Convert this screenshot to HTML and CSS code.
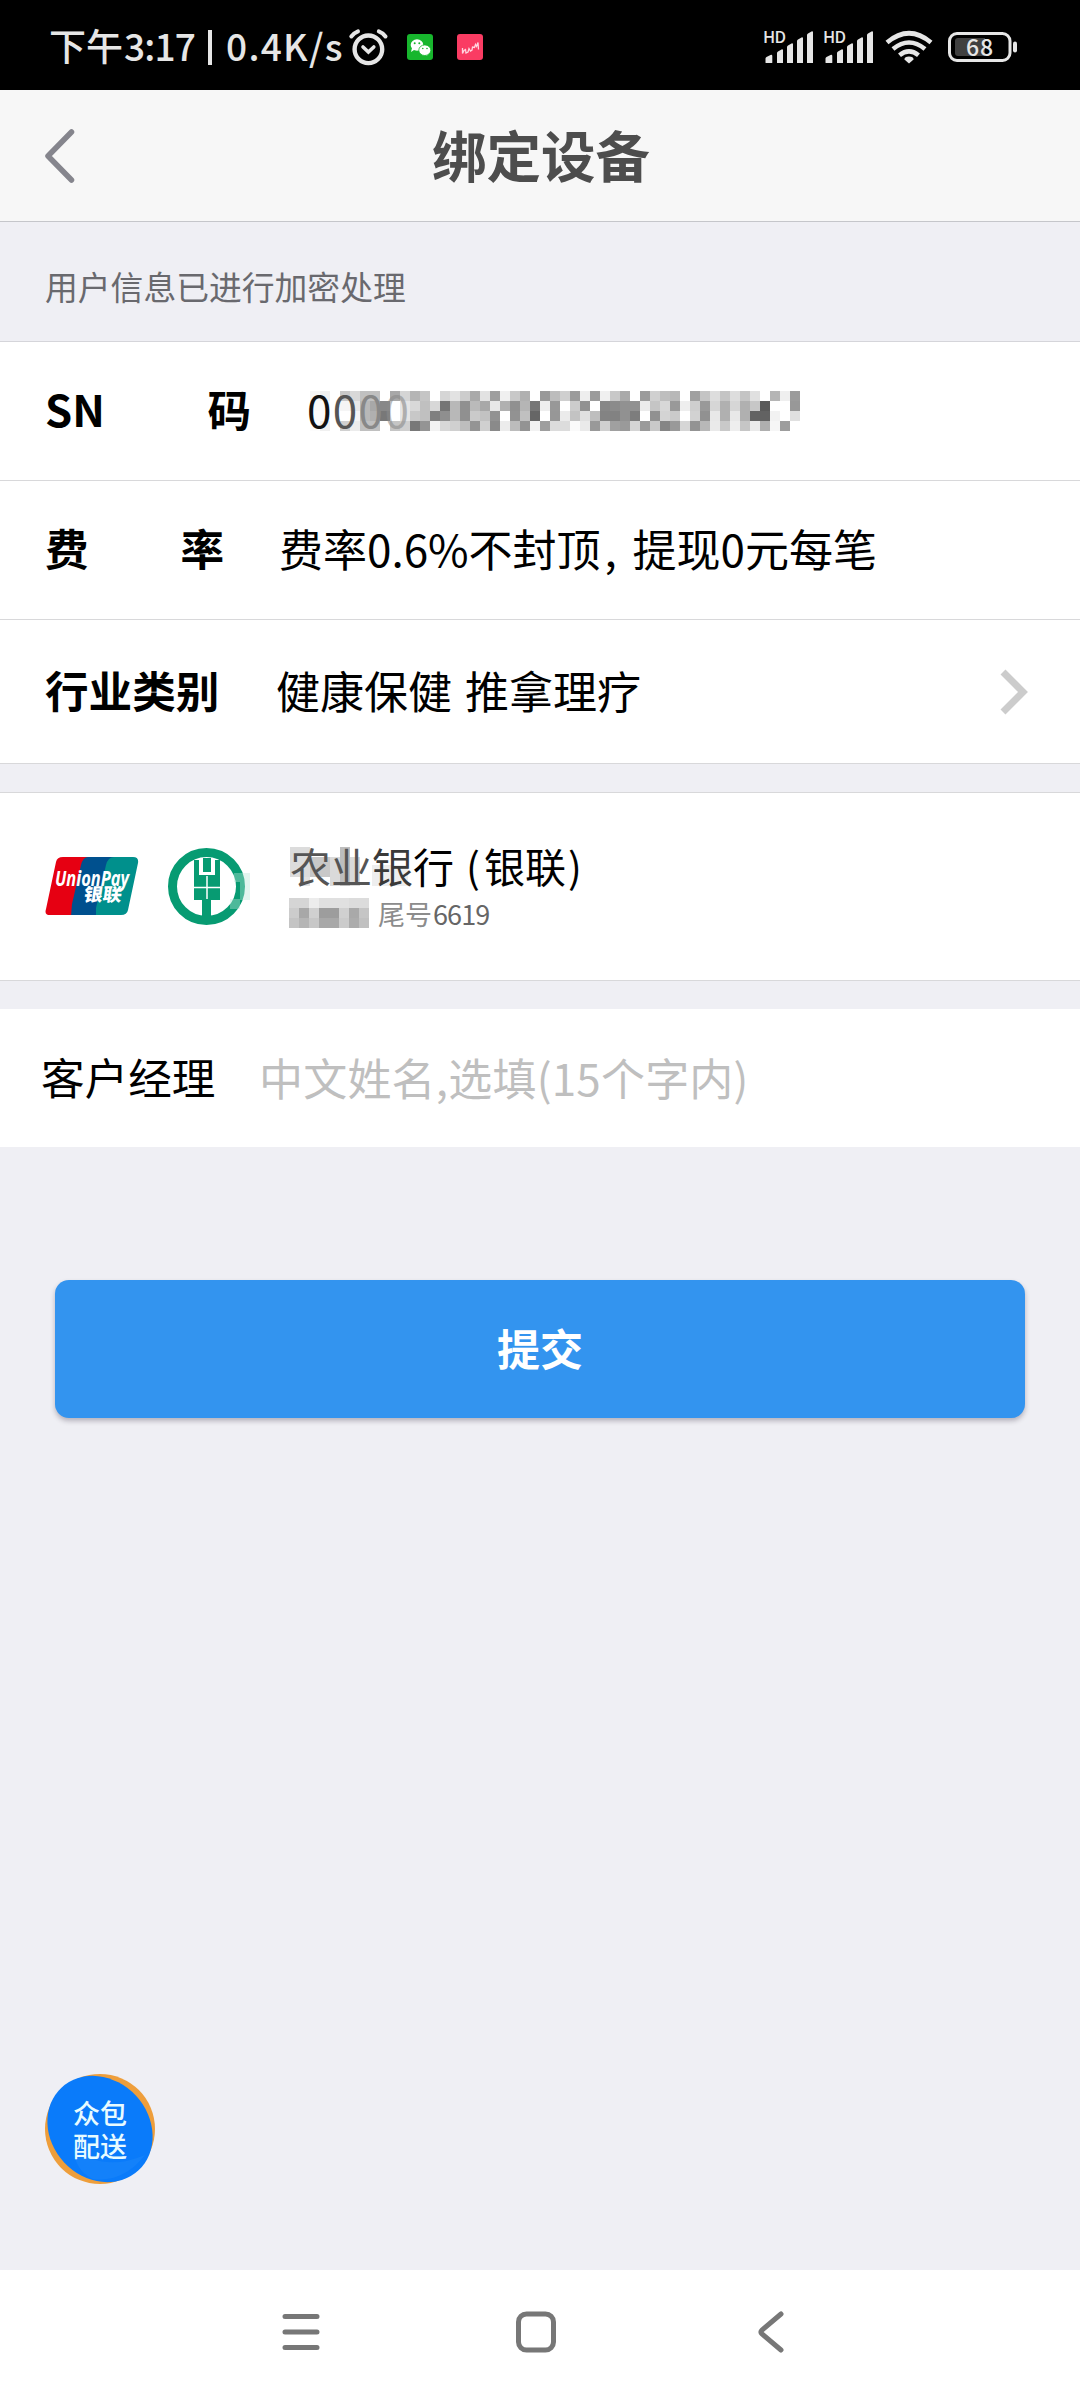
FILE: index.html
```html
<!DOCTYPE html>
<html lang="zh-CN">
<head>
<meta charset="utf-8">
<title>绑定设备</title>
<link rel="stylesheet" href="styles.css">
</head>
<body>
<div class="status">
  <div class="status-left">
    <span class="clock">下午</span><span class="time">3:17</span><span class="bar"></span><span class="speed">0.4K/s</span>
    <svg class="alarm" width="42" height="38" viewBox="0 0 42 38" fill="none" stroke="#e6e6e6" stroke-linecap="round"><circle cx="21.4" cy="21.3" r="13.8" stroke-width="4.4"/><path d="M4.3 8.5Q7 5 11 3.4M38.5 8.5Q36 5 31.8 3.4" stroke-width="4"/><path d="M16 19l5.4 5 5.4-5" stroke-width="3.6"/></svg>
    <svg class="wechat" width="26" height="26" viewBox="0 0 26 26"><rect width="26" height="26" rx="3" fill="#17b62d"/><path d="M4 18l1-4h5zM20 22l1-4h-5z" fill="#fff"/><ellipse cx="10" cy="11" rx="6.3" ry="5.8" fill="#fff"/><ellipse cx="17.8" cy="16.2" rx="6" ry="5.3" fill="#fff" stroke="#17b62d" stroke-width=".8"/><g fill="#17b62d"><circle cx="7.7" cy="9.3" r="1"/><circle cx="12.3" cy="9.3" r="1"/><circle cx="15.8" cy="14.5" r=".8"/><circle cx="20" cy="14.5" r=".8"/></g></svg>
    <svg width="26" height="26" viewBox="0 0 26 26"><rect width="26" height="26" rx="3" fill="#fa3c63"/><path d="M5.5 14v5.500l1.500-3 1.500-1 .5 3.500 2-1 1-3.500 1.500 2.500 1.500-1 .5-3 2 .5 1-3 1 2 1.500-4 .5 7" fill="none" stroke="#ffd5df" stroke-width="1.300"/></svg>
  </div>
  <div class="status-right">
    <svg class="signal" width="52" height="34" viewBox="0 0 52 34" fill="#e6e6e6"><text x="0" y="13" class="hd" textLength="23">HD</text><path d="M2.5 32.5v-4q0-1 1-1.6l4-2q1.800-.5 1.800 1v6.600q0 .5-.5.5H3q-.5 0-.5-.5zM14 33v-10q0-1 1-1.600l3.500-2q1.500-.5 1.500 1V33zM24 33V17q0-1 1-1.600l3.500-2q1.500-.5 1.500 1V33zM34 33V11q0-1 1-1.600l3.500-2q1.500-.5 1.500 1V33zM44 33V5q0-1 1-1.600l3.500-2q1.500-.5 1.500 1V33z"/></svg>
    <svg class="signal" width="52" height="34" viewBox="0 0 52 34" fill="#e6e6e6"><text x="0" y="13" class="hd" textLength="23">HD</text><path d="M2.5 32.5v-4q0-1 1-1.6l4-2q1.800-.5 1.800 1v6.600q0 .5-.5.5H3q-.5 0-.5-.5zM14 33v-10q0-1 1-1.600l3.500-2q1.500-.5 1.500 1V33zM24 33V17q0-1 1-1.600l3.500-2q1.500-.5 1.500 1V33zM34 33V11q0-1 1-1.600l3.500-2q1.500-.5 1.500 1V33zM44 33V5q0-1 1-1.600l3.500-2q1.500-.5 1.500 1V33z"/></svg>
    <svg class="wifi" width="48" height="34" viewBox="0 0 48 34" fill="none" stroke="#e6e6e6" stroke-width="4.6"><path d="M2 12.5Q24-6 46 12.500M8 19Q24 6 40 19M14.500 25.200Q24 17.500 33.500 25.200"/><path d="M24 33.500l-4.600-4q0-3 4.600-3t4.600 3z" fill="#e6e6e6" stroke="none"/></svg>
    <svg width="70" height="32" viewBox="0 0 70 32"><rect x="1.5" y="2.5" width="60.5" height="27" rx="7.5" fill="none" stroke="#e6e6e6" stroke-width="3"/><path d="M10 7h27v18H10q-3 0-3-3V10q0-3 3-3z" fill="#404040"/><rect x="65" y="10.500" width="4" height="11" rx="2" fill="#e6e6e6"/><text x="18" y="24.5" class="level" textLength="27">68</text></svg>
  </div>
</div>
<header class="nav">
  <svg class="back" width="34" height="56" viewBox="0 0 34 56"><path d="M28.500 4L5 28l23.500 24" fill="none" stroke="#85858d" stroke-width="5.500" stroke-linecap="round" stroke-linejoin="round"/></svg>
  <h1>绑定设备</h1>
</header>
<p class="notice">用户信息已进行加密处理</p>
<main>
  <section class="group">
    <div class="row"><div class="label sn"><span>SN</span><span>码</span></div><div class="serial"><span class="digits"><i>0</i><i>0</i><i>0</i><i>0</i></span><svg id="serial-mask" width="490" height="40" shape-rendering="crispEdges"></svg></div></div>
    <div class="row"><div class="label rate"><span>费</span><span>率</span></div><div class="value">费率0.6%不封顶<span class="comma">,</span>提现0元每笔</div></div>
    <div class="row industry"><div class="label">行业类别</div><div class="value">健康保健<span class="space"> </span>推拿理疗</div><svg class="chevron" width="30" height="48" viewBox="0 0 30 48"><path d="M4 4l20 20L4 44" fill="none" stroke="#ccc" stroke-width="7"/></svg></div>
  </section>
  <section class="bank">
    <svg class="unionpay" width="94" height="59" viewBox="0 0 94 59"><defs><clipPath id="card"><path d="M18 0H88Q94 0 93 6L83 53Q82 58 76 58H5Q-1 58 1 52L11 5Q12 0 18 0z"/></clipPath></defs><g clip-path="url(#card)"><path d="M0 0h50v59H0z" fill="#e60012"/><path d="M43 0h32L60 59H26L27 47 36 8Q38 0 43 0z" fill="#00508e"/><path d="M69 0h25v59H51V51L61 8Q63 0 69 0z" fill="#00908c"/></g><text x="10" y="28.500" class="up-en" textLength="74" lengthAdjust="spacingAndGlyphs">UnionPay</text><g transform="translate(38 44) skewX(-8)"><text class="up-zh" textLength="38" lengthAdjust="spacingAndGlyphs">银联</text></g></svg>
    <svg class="abc" width="84" height="78" viewBox="0 0 84 78"><circle cx="38.500" cy="38.500" r="34" fill="#fff" stroke="#079b72" stroke-width="9"/><path d="M26 12h5v15h16V12h5v40h-9v20h-9V52h-8zM35 10h8v14h-8z" fill="#079b72"/><path d="M39 28v23M26 39.500h26" stroke="#fff" stroke-width="1.500"/><path d="M66 25h16v27H72v9H62V51h10V34h-6z" fill="#b9e5d8" opacity=".4"/></svg>
    <div class="bank-info">
      <div class="bank-name"><span class="masked">农业</span><span class="faded">银</span><span>行</span><span class="paren">(</span><span>银联</span><span class="paren">)</span></div>
      <div class="bank-tail"><svg id="name-mask" width="80" height="30" shape-rendering="crispEdges"></svg><span class="tail-label">尾号</span><span class="tail-number">6619</span></div>
    </div>
  </section>
  <section class="manager"><div class="manager-label">客户经理</div><div class="placeholder">中文姓名,选填(15个字内)</div></section>
  <button class="submit">提交</button>
</main>
<div class="floater">
  <svg width="112" height="112" viewBox="0 0 112 112"><circle cx="56" cy="56" r="55" fill="#ee9e3b"/><ellipse cx="56" cy="56" rx="56.500" ry="49" transform="rotate(47 56 56)" fill="#0a7bfa"/><path d="M29 74q30 26 72 8-22 28-52 24-18-8-20-32z" fill="#268cf9" opacity=".35"/></svg>
  <div class="floater-text"><span>众包</span><span>配送</span></div>
</div>
<footer class="system">
  <svg width="40" height="44" viewBox="0 0 40 44"><path d="M4 6.500h32M4 22h32M4 37.500h32" stroke="#777" stroke-width="5" stroke-linecap="round"/></svg>
  <svg class="home" width="42" height="44" viewBox="0 0 42 44"><rect x="3.500" y="4" width="35" height="36" rx="8" fill="none" stroke="#777" stroke-width="5"/></svg>
  <svg width="30" height="44" viewBox="0 0 30 44"><path d="M25 4L6 20q-2 2 0 4l19 16" fill="none" stroke="#777" stroke-width="5" stroke-linecap="round"/></svg>
</footer>
<script src="mosaic.js"></script>
</body>
</html>
```
FILE: styles.css
```css
* { box-sizing: border-box; }
body {
  margin: 0;
  width: 1080px;
  height: 2400px;
  display: flex;
  flex-direction: column;
  background: #efeff4;
  color: #000;
  font-family: "Noto Sans CJK SC", sans-serif;
  font-size: 44px;
  line-height: 1;
  white-space: nowrap;
  overflow: hidden;
}
svg { display: block; flex: none; overflow: visible; }
.status {
  height: 90px;
  flex: none;
  padding: 0 62px 0 49px;
  display: flex;
  justify-content: space-between;
  background: #000;
  color: #e6e6e6;
  font-size: 37px;
  font-weight: 500;
}
.status-left, .status-right { display: flex; align-items: center; height: 94px; }
.clock, .time, .speed { padding-bottom: 3px; }
.clock { width: 75px; }
.time { width: 84px; letter-spacing: -.8px; }
.bar { width: 4px; height: 35px; background: #e6e6e6; margin-right: 14px; }
.speed { width: 121px; letter-spacing: 1.3px; }
.alarm { margin-right: 18px; }
.wechat { margin-right: 24px; }
.signal { margin-right: 8px; }
.wifi { margin-left: 2px; margin-right: 15px; }
.hd { font-size: 16.5px; font-weight: 500; }
.level { font-size: 23px; font-weight: 500; fill: #e6e6e6; }
.nav {
  height: 132px;
  flex: none;
  display: grid;
  grid-template-columns: 1fr auto 1fr;
  align-items: center;
  background: #f7f7f7;
  border-bottom: 1px solid #c5c6ca;
}
.back { margin-left: 43px; }
h1 { margin: 0 0 3px 2px; color: #4d4d4d; font-size: 54.5px; font-weight: 700; }
.notice {
  height: 120px;
  flex: none;
  margin: 0;
  padding-left: 45px;
  border-bottom: 1px solid #d5d5da;
  line-height: 127px;
  font-size: 32.8px;
  color: #69696e;
}
.group { background: #fff; }
.row {
  height: 139px;
  display: flex;
  align-items: center;
  padding-left: 45px;
  border-bottom: 1px solid #d8d8da;
}
.label, .value { padding-bottom: 4px; }
.label { width: 231px; font-size: 43.6px; font-weight: 700; }
.sn, .rate { display: flex; justify-content: space-between; }
.sn { width: 206px; }
.rate { width: 179px; }
.rate + .value { margin-left: 55px; }
.comma { display: inline-block; width: 32px; padding-left: 4px; }
.space { display: inline-block; width: 13px; }
.serial { display: grid; align-items: center; margin-left: 56px; }
.serial > * { grid-area: 1 / 1; }
.serial svg { margin-left: 3px; }
.digits { z-index: 1; display: flex; padding-bottom: 4px; }
.digits i { font-style: normal; width: 25.8px; color: #111; }
.digits i:nth-child(2) { color: #555; }
.digits i:nth-child(3) { color: #888; }
.digits i:nth-child(4) { color: #8b8b8b; opacity: .6; }
.industry { height: 144px; }
.chevron { margin-left: auto; margin-right: 51px; }
.bank {
  height: 189px;
  margin-top: 28px;
  padding-left: 45px;
  display: flex;
  align-items: center;
  background: #fff;
  border-top: 1px solid #d8d8da;
  border-bottom: 1px solid #d8d8da;
}
.up-en { font: italic 700 22px "Open Sans", sans-serif; fill: #fff; }
.up-zh { font-size: 18px; font-weight: 900; fill: #fff; }
.abc { margin-left: 29px; }
.bank-info { margin-left: 38px; }
.bank-name { display: flex; font-size: 41px; }
.masked {
  color: #555;
  background:
    linear-gradient(#c8c8c8, #c8c8c8) 20px 12px / 20px 20px no-repeat,
    linear-gradient(#bdbdbd, #bdbdbd) 50px 2px / 10px 40px no-repeat,
    linear-gradient(#dcdcdc, #dcdcdc) 0 2px / 20px 30px no-repeat,
    linear-gradient(#dadada, #dadada) 40px 12px / 30px 30px no-repeat,
    linear-gradient(#e2e2e2, #e2e2e2) 10px 2px / 10px 40px no-repeat;
}
.faded { color: #3a3a3a; background: linear-gradient(#eee, #eee) 0 20px / 36px 22px no-repeat; }
.paren { width: 30px; padding-left: 12px; }
.paren:last-child { padding-left: 2px; }
.bank-tail { display: flex; align-items: center; margin: 12px 0 0 -1px; font-size: 27px; color: #666; }
.tail-label, .tail-number { padding-top: 1px; }
.tail-label { margin-left: 9px; width: 55px; color: #8c8c8c; }
.tail-number { letter-spacing: -.9px; }
.manager {
  height: 138px;
  margin-top: 28px;
  padding: 0 0 3px 41px;
  display: flex;
  align-items: center;
  background: #fff;
}
.manager-label { width: 218px; font-size: 43.6px; }
.placeholder { color: #bfbfbf; letter-spacing: .2px; }
.submit {
  display: block;
  width: 970px;
  height: 138px;
  margin: 133px 0 0 55px;
  padding: 0 0 3px;
  border: 0;
  border-radius: 14px;
  background: #3394ef;
  box-shadow: 0 3px 5px rgba(60, 50, 70, .32);
  color: #fff;
  font: 700 43px/1 "Noto Sans CJK SC", sans-serif;
}
.floater { display: grid; width: 112px; height: 112px; margin: auto 0 85px 44px; place-items: center; }
.floater > * { grid-area: 1 / 1; }
.floater-text { z-index: 1; display: grid; gap: 5px; color: #e8fbff; font-size: 27px; line-height: 28px; font-weight: 500; }
.system {
  height: 130px;
  flex: none;
  padding: 0 294px 6px 281px;
  display: flex;
  align-items: center;
  justify-content: space-between;
  background: #fff;
}
.home { margin-right: 6px; }
```
FILE: mosaic.js
```js
function mosaic(id, rows) {
  const svg = document.getElementById(id);
  rows.forEach((row, y) => row.split(" ").forEach((shade, x) => {
    const cell = document.createElementNS("http://www.w3.org/2000/svg", "rect");
    cell.setAttribute("x", x * 10);
    cell.setAttribute("y", y * 10);
    cell.setAttribute("width", 10);
    cell.setAttribute("height", 10);
    cell.setAttribute("fill", "#" + shade + shade + shade);
    svg.appendChild(cell);
  }));
}

mosaic("serial-mask", [
  "f6 f0 ff c8 d8 c0 c0 ff a8 d5 b5 c5 ff d5 e2 cc a9 e2 9e f0 c8 b0 ff 99 bc cf 9b ee 9b f0 c8 a9 ff 9b d0 be b8 ff a0 c4 dd c4 dd c4 e0 ff b5 ef 9b",
  "f8 fa ff f5 e8 b8 a8 88 ff e5 d8 c0 d8 75 b8 90 ba a8 e8 b0 90 b5 77 ee 98 ff cc 91 ff 87 8b 91 91 eb c5 d8 99 ee ce 99 d6 b0 d6 b0 c7 5a ff ff 98",
  "fa fb ff ff f5 b8 b0 78 ff e5 c8 c0 80 8f b8 90 ca c2 92 ff 92 c0 66 ff 97 eb c3 e0 be 83 82 91 7d ff 91 d4 ca ff d2 91 e8 b0 e8 b0 62 62 f2 ff e0",
  "fc f0 ff d0 ec c0 c0 ff c5 cf 78 94 f2 d8 d0 bd 94 d0 8a ec bc 93 f2 9e dc dc fa ea 99 d0 a0 9a d5 9a c9 85 99 d6 93 b8 ea c9 ee c6 ea af f6 9d ff"
]);
mosaic("name-mask", [
  "d5 d5 ec e0 e0 e0 dc dc",
  "cc a8 d0 9d 9d d0 a9 c5",
  "c4 b5 c7 a8 a8 cb ac c0"
]);
```
